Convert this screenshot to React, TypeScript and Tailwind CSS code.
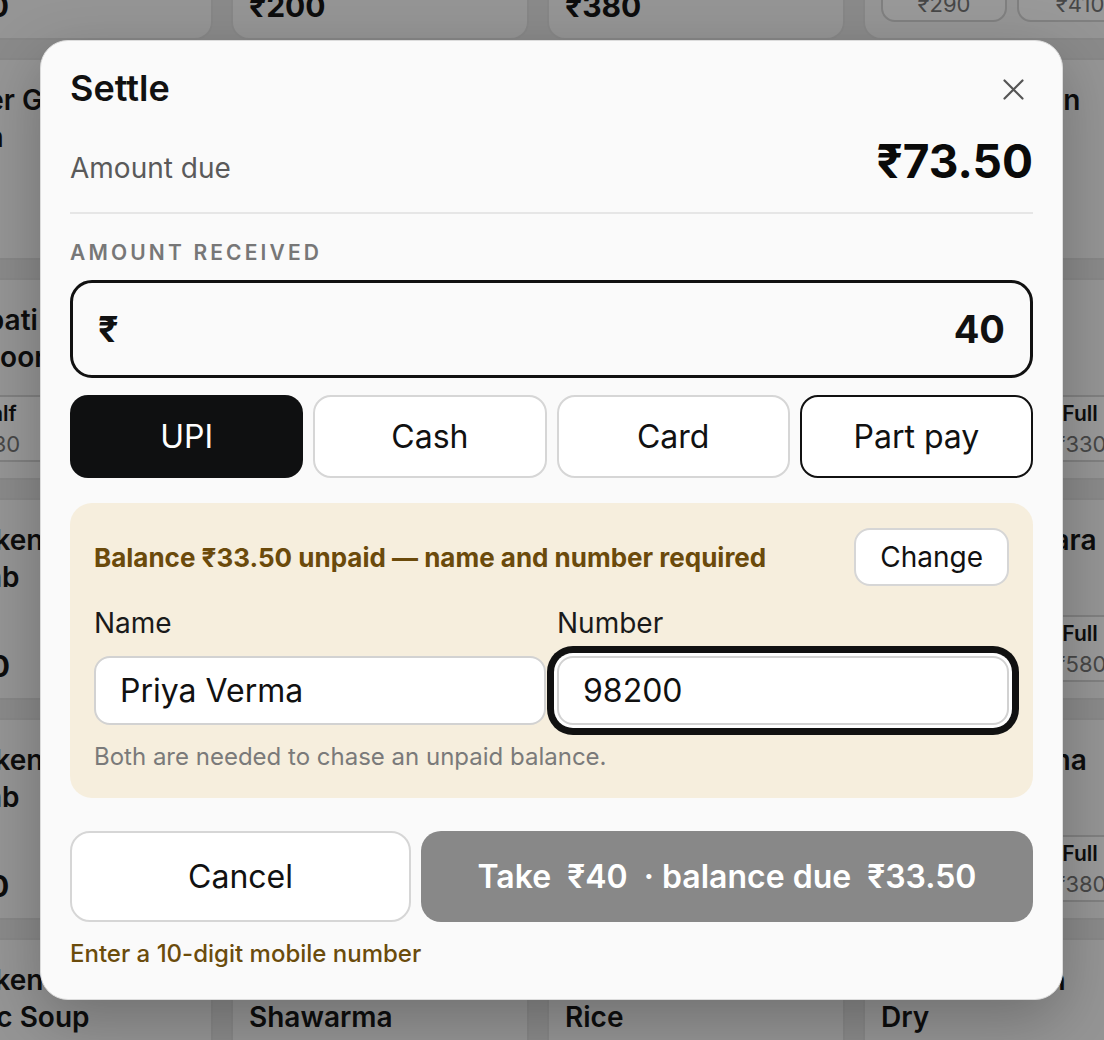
import React from "react";

type Variant = { label: string; price: string };
type Card = { title: string[]; price?: string; variants?: Variant[] };

const rows: Card[][] = [
  [
    { title: ["Veg Hakka", "Noodles"], price: "₹240" },
    { title: ["Veg Fried", "Rice"], price: "₹200" },
    { title: ["Chicken Fried", "Rice"], price: "₹380" },
    { title: ["Chilli Paneer"], variants: [{ label: "Half", price: "₹290" }, { label: "Full", price: "₹410" }] },
  ],
  [
    { title: ["Butter Garlic", "Naan"], price: "₹90" },
    { title: ["Paneer Tikka"], price: "₹320" },
    { title: ["Dal Makhani"], price: "₹260" },
    { title: ["Butter Chicken"], price: "₹360" },
  ],
  [
    { title: ["Chapati", "Tandoori"], variants: [{ label: "Half", price: "₹130" }, { label: "Full", price: "₹230" }] },
    { title: ["Jeera Rice"], price: "₹180" },
    { title: ["Kadai Paneer"], price: "₹300" },
    { title: ["Paneer Tikka"], variants: [{ label: "Half", price: "₹190" }, { label: "Full", price: "₹330" }] },
  ],
  [
    { title: ["Chicken", "Kebab"], price: "₹340" },
    { title: ["Veg Manchurian"], price: "₹220" },
    { title: ["Malai Kofta"], price: "₹280" },
    { title: ["Chicken Angara"], variants: [{ label: "Half", price: "₹320" }, { label: "Full", price: "₹580" }] },
  ],
  [
    { title: ["Chicken", "Kebab"], price: "₹360" },
    { title: ["Spring Rolls"], price: "₹160" },
    { title: ["Hara Bhara Kabab"], price: "₹240" },
    { title: ["Chicken Korma"], variants: [{ label: "Half", price: "₹220" }, { label: "Full", price: "₹380" }] },
  ],
  [
    { title: ["Chicken", "Garlic Soup"], price: "₹180" },
    { title: ["Chicken", "Shawarma"], price: "₹150" },
    { title: ["Egg Fried", "Rice"], price: "₹190" },
    { title: ["Chilli Chicken", "Dry"], price: "₹320" },
  ],
];

function MenuCard({ card }: { card: Card }) {
  return (
    <div className="flex flex-col justify-between rounded-[18px] border-2 border-[#e2e2e2] bg-[#f8f8f8] px-[16px] pt-[22px] pb-[14px]">
      <div className="text-[28px] font-semibold leading-[37px] text-[#171717]">
        {card.title.map((t, i) => (
          <div key={i}>{t}</div>
        ))}
      </div>
      {card.variants ? (
        <div className="flex gap-[10px] pb-[2px]">
          {card.variants.map((v, i) => (
            <div
              key={i}
              className="flex h-[67px] w-[126px] flex-col items-center justify-center rounded-[14px] border-2 border-[#d6d6d6] bg-white"
            >
              <span className="text-[21px] font-semibold leading-[30px] text-[#171717]">{v.label}</span>
              <span className="text-[22px] leading-[30px] text-[#777777]">{v.price}</span>
            </div>
          ))}
        </div>
      ) : (
        <div className="text-[30px] font-bold leading-[36px] text-[#171717]">{card.price}</div>
      )}
    </div>
  );
}

export default function App() {
  return (
    <div className="relative h-[1040px] w-full overflow-hidden bg-[#e6e6e6] font-['Inter','Noto_Sans',sans-serif]">
      {/* background menu grid */}
      <div className="ml-[-85px] mt-[-162px] grid w-[1300px] grid-cols-[repeat(4,298px)] auto-rows-[202px] gap-[18px]">
        {rows.flat().map((c, i) => (
          <MenuCard key={i} card={c} />
        ))}
      </div>

      {/* overlay */}
      <div className="absolute inset-0 bg-black/40" />

      {/* dialog */}
      <div className="absolute left-[40px] top-[40px] w-[1023px] rounded-[28px] border border-[#dcdcdc] bg-[#fafafa] px-[29px] pt-[25px] pb-[30px] shadow-[0_20px_60px_rgba(0,0,0,0.25)]">
        <div className="flex items-start justify-between">
          <h2 className="text-[36px] font-semibold leading-[44px] text-[#111111]">Settle</h2>
          <button className="mr-[9px] mt-[13px] text-[#555555]">
            <svg width="21" height="21" viewBox="0 0 21 21" fill="none" stroke="currentColor" strokeWidth="2.2" strokeLinecap="round">
              <path d="M1.5 1.5L19.5 19.5M19.5 1.5L1.5 19.5" />
            </svg>
          </button>
        </div>

        <div className="mt-[23px] flex items-baseline justify-between border-b-2 border-[#e6e6e6] pb-[23px]">
          <span className="text-[28px] leading-[36px] text-[#5a5a5a]">Amount due</span>
          <span className="text-[46px] font-bold leading-[56px] text-[#0a0a0a]">₹73.50</span>
        </div>

        <div className="mt-[27px] text-[21px] font-semibold leading-[24px] tracking-[0.15em] text-[#777777]">
          AMOUNT RECEIVED
        </div>

        <div className="mt-[15px] flex h-[98px] items-center justify-between rounded-[22px] border-[3px] border-[#111111] px-[25px]">
          <span className="text-[36px] font-bold text-[#111111]">₹</span>
          <span className="text-[38px] font-bold text-[#111111]">40</span>
        </div>

        <div className="mt-[17px] grid grid-cols-4 gap-[10px]">
          <button className="h-[83px] rounded-[18px] bg-[#0f1011] text-[32px] text-white">UPI</button>
          <button className="h-[83px] rounded-[18px] border-2 border-[#d6d6d6] bg-white text-[32px] text-[#111111]">Cash</button>
          <button className="h-[83px] rounded-[18px] border-2 border-[#d6d6d6] bg-white text-[32px] text-[#111111]">Card</button>
          <button className="h-[83px] rounded-[18px] border-2 border-[#111111] bg-white text-[32px] text-[#111111]">Part pay</button>
        </div>

        <div className="mt-[25px] rounded-[22px] bg-[#f6eedd] px-[24px] pt-[25px] pb-[26px]">
          <div className="flex items-center justify-between">
            <span className="text-[26px] font-bold text-[#6b4a0b]">
              Balance ₹33.50 unpaid — name and number required
            </span>
            <button className="h-[58px] rounded-[16px] border-2 border-[#d6d6d6] bg-white px-[24px] text-[28px] text-[#111111]">
              Change
            </button>
          </div>

          <div className="mt-[21px] grid grid-cols-2 gap-[11px]">
            <div>
              <div className="text-[28px] leading-[32px] text-[#1a1a1a]">Name</div>
              <div className="mt-[17px] flex h-[69px] items-center rounded-[16px] border-2 border-[#d2d2d2] bg-white px-[24px] text-[32px] text-[#111111]">
                Priya Verma
              </div>
            </div>
            <div>
              <div className="text-[28px] leading-[32px] text-[#1a1a1a]">Number</div>
              <div className="mt-[17px] flex h-[69px] items-center rounded-[16px] border-2 border-[#d2d2d2] bg-white px-[24px] text-[32px] text-[#111111] shadow-[0_0_0_3px_#ffffff,0_0_0_10px_#111111]">
                98200
              </div>
            </div>
          </div>

          <div className="mt-[17px] text-[24px] leading-[30px] text-[#7a7a7a]">
            Both are needed to chase an unpaid balance.
          </div>
        </div>

        <div className="mt-[33px] flex gap-[10px]">
          <button className="h-[91px] w-[341px] rounded-[20px] border-2 border-[#d6d6d6] bg-white text-[32px] text-[#111111]">
            Cancel
          </button>
          <button className="h-[91px] flex-1 whitespace-pre rounded-[20px] bg-[#888888] text-[32px] font-semibold text-white">
            {"Take  ₹40  · balance due  ₹33.50"}
          </button>
        </div>

        <div className="mt-[17px] text-[24px] font-medium leading-[30px] text-[#6b4c0c]">
          Enter a 10-digit mobile number
        </div>
      </div>
    </div>
  );
}
